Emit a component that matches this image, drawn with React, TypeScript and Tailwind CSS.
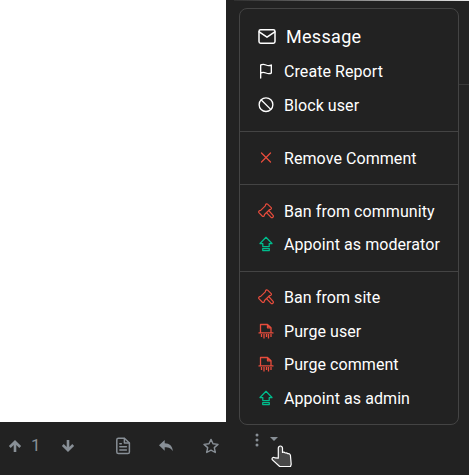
import React from 'react';

type IconProps = { className?: string };

const stroke = {
  fill: 'none',
  stroke: 'currentColor',
  strokeLinecap: 'round' as const,
  strokeLinejoin: 'round' as const,
};

const MailIcon = () => (
  <svg className="h-[18px] w-[18px] shrink-0" viewBox="0 0 18 18" strokeWidth="1.5" {...stroke}>
    <rect x="1" y="1.8" width="16" height="13.4" rx="1.6" />
    <path d="M1.2 3.8 9 9.2l7.8-5.4" />
  </svg>
);

const FlagIcon = () => (
  <svg className="h-4 w-4 shrink-0" viewBox="0 0 24 24" strokeWidth="2" {...stroke}>
    <path d="M4 15s1-1 4-1 5 2 8 2 4-1 4-1V3s-1 1-4 1-5-2-8-2-4 1-4 1z" />
    <path d="M4 22.5V15" />
  </svg>
);

const SlashIcon = () => (
  <svg className="h-4 w-4 shrink-0" viewBox="0 0 24 24" strokeWidth="2" {...stroke}>
    <circle cx="12" cy="11.5" r="10.3" />
    <path d="m4.9 4.4 14.2 14.2" />
  </svg>
);

const CrossIcon = () => (
  <svg className="h-4 w-4 shrink-0 text-[#e74c3c]" viewBox="0 0 16 16" strokeWidth="1.25" {...stroke}>
    <path d="m3.5 3 9 9m0-9-9 9" />
  </svg>
);

const GavelIcon = () => (
  <svg className="h-4 w-4 shrink-0 text-[#e74c3c]" viewBox="0 0 16 16" strokeWidth="1.2" {...stroke}>
    <path d="M7.6 1.6Q8.6.3 9.6 1.1L13.2 4.7Q13.900 5.700 12.6 6.500L11.500 6.700 6.500 11.500 6.200 12.800Q5.200 13.900 4.200 13L.9 9.600Q.2 8.500 1.500 7.700L2.700 7.400 7.300 2.900z" />
    <path d="m10.700 7.500 4.400 4.900q.7 1.100-.2 1.900t-2-.1L8.500 9.600" />
  </svg>
);

const PromoteIcon = () => (
  <svg className="h-4 w-4 shrink-0 text-[#00bc8c]" viewBox="0 0 16 16" strokeWidth="1.25" {...stroke}>
    <path d="M8 1.300 14 7.500h-2.800v3H4.800v-3H2z" />
    <path d="M4.700 12.500h6.600v2H4.700z" />
  </svg>
);

const ShredIcon = () => (
  <svg className="h-4 w-4 shrink-0 text-[#e74c3c]" viewBox="0 0 16 16" strokeWidth="1.3" {...stroke}>
    <path d="M2.500 9.500V1.500h7l3.500 3.300v4.700M9.500 1.500v3.300H13" />
    <path d="M1 9.900h14" />
    <path d="M3.500 11v3M6 11v4.500M8.500 11v3M10.500 11v4.500M13 11v3" strokeLinecap="butt" />
  </svg>
);

const ArrowIcon = ({ className = '' }: IconProps) => (
  <svg className={`h-4 w-4 shrink-0 ${className}`} viewBox="0 0 16 16" strokeWidth="2.6" fill="none" stroke="currentColor">
    <path d="M8 14V3.5M2.8 9 8 3.8 13.2 9" />
  </svg>
);

const FileIcon = ({ className = '' }: IconProps) => (
  <svg className={`h-[18px] w-4 shrink-0 ${className}`} viewBox="0 0 16 18" strokeWidth="1.5" {...stroke}>
    <path d="M3.4 1.2h6l5 4.8v9q0 1.6-1.6 1.6H3.4q-1.6 0-1.6-1.6V2.8q0-1.6 1.6-1.6z" />
    <path d="M9.4 1.4V6h4.8M4.8 6.8h1.5M4.8 9.8h6.6M4.8 13h6.6" />
  </svg>
);

const ReplyIcon = ({ className = '' }: IconProps) => (
  <svg className={`h-4 w-4 shrink-0 ${className}`} viewBox="0 0 16 16" fill="currentColor">
    <path d="M6.7 2v3.3c5 .2 7.7 2.7 8.2 8-1.7-2.8-3.8-4.1-8.2-4.1v3.5L1 7.3z" />
  </svg>
);

const StarIcon = ({ className = '' }: IconProps) => (
  <svg className={`h-4 w-4 shrink-0 ${className}`} viewBox="0 0 16 16" strokeWidth="1.4" fill="none" stroke="currentColor" strokeLinejoin="round">
    <path d="m8 1.4 2 4.4 5 .6-3.7 3.2 1 4.9L8 12.1l-4.3 2.4 1-4.9L1 6.4l5-.6z" />
  </svg>
);

const HandCursor = () => (
  <svg className="absolute left-[271px] top-[445px] h-[23px] w-[22px]" viewBox="0 0 22 23" fill="#484848" stroke="#fff" strokeWidth="1.2" strokeLinejoin="round">
    <path d="M7.3 13.2V3.1Q7.5 1 9.4 1t2.1 2.1v4.4q1.7-.8 2.7.5 1.7-.5 2.5.7 2-.4 2.7 1.4l.8 9.2-.7 2.2H8.7L1.2 14.6q-.5-1.6.8-2.1 1-.4 2 .4z" />
  </svg>
);

type Entry = { label: string; icon: React.ReactNode };

const groups: Entry[][] = [
  [
    { label: 'Create Report', icon: <FlagIcon /> },
    { label: 'Block user', icon: <SlashIcon /> },
  ],
  [{ label: 'Remove Comment', icon: <CrossIcon /> }],
  [
    { label: 'Ban from community', icon: <GavelIcon /> },
    { label: 'Appoint as moderator', icon: <PromoteIcon /> },
  ],
  [
    { label: 'Ban from site', icon: <GavelIcon /> },
    { label: 'Purge user', icon: <ShredIcon /> },
    { label: 'Purge comment', icon: <ShredIcon /> },
    { label: 'Appoint as admin', icon: <PromoteIcon /> },
  ],
];

export default function App() {
  return (
    <div className="relative flex h-[475px] w-[469px] flex-col overflow-hidden bg-[#222] font-['Roboto',sans-serif] text-white">
      <div className="flex h-[422px]">
        <div className="w-[226px] bg-white" />
        <div className="ml-2 flex flex-1 flex-col">
          <div className="h-px bg-linear-to-r from-[#303030] to-[#e8e8e8]" />
          <div className="ml-6 h-[84px] border-b border-[#383838]" />
        </div>
      </div>

      <div className="flex h-[48px] items-center pl-[7px] text-[#888f96]">
        <ArrowIcon />
        <span className="ml-2 w-[10px] text-[17px]">1</span>
        <ArrowIcon className="ml-[19px] rotate-180" />
        <FileIcon className="ml-[39px]" />
        <ReplyIcon className="ml-[27px]" />
        <StarIcon className="ml-[29px]" />
        <svg className="mb-3 ml-9 h-[14px] w-1" viewBox="0 0 4 14" fill="currentColor">
          <circle cx="2" cy="2" r="1.5" />
          <circle cx="2" cy="7" r="1.5" />
          <circle cx="2" cy="12" r="1.5" />
        </svg>
        <svg className="mb-[14px] ml-[11px] h-1 w-2" viewBox="0 0 8 4" fill="currentColor">
          <path d="M0 0h8L4 4z" />
        </svg>
      </div>

      <div className="absolute left-[239px] top-[8px] h-[417px] w-[220px] rounded-lg border border-[#444] bg-[#222] pt-[11px]">
        <button className="flex h-[35.4px] w-full items-center pb-[1.5px] pl-[18px] text-lg tracking-[0.3px]">
          <MailIcon />
          <span className="ml-[10px] whitespace-nowrap">Message</span>
        </button>
        {groups.map((items, i) => (
          <div key={i} className={i ? 'mt-[9px] border-t border-[#444] pt-[9.5px]' : ''}>
            {items.map(({ label, icon }) => (
              <button key={label} className="flex h-[33.5px] w-full items-center pl-[18px] text-base tracking-[0.07px]">
                <span className="-mt-[2px]">{icon}</span>
                <span className="ml-[10px] whitespace-nowrap">{label}</span>
              </button>
            ))}
          </div>
        ))}
      </div>
      <HandCursor />
    </div>
  );
}
